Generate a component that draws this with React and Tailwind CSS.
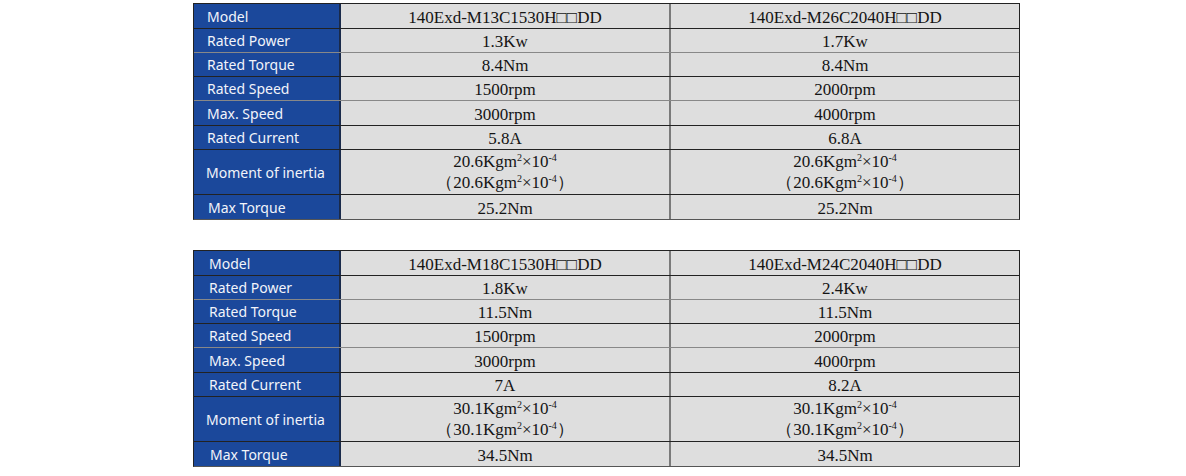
const tables = [
  {
    models: ["140Exd-M13C1530H□□DD", "140Exd-M26C2040H□□DD"],
    rows: [
      ["Rated Power", "1.3Kw", "1.7Kw"],
      ["Rated Torque", "8.4Nm", "8.4Nm"],
      ["Rated Speed", "1500rpm", "2000rpm"],
      ["Max. Speed", "3000rpm", "4000rpm"],
      ["Rated Current", "5.8A", "6.8A"],
    ],
    inertia: ["20.6", "20.6"],
    maxTorque: ["25.2Nm", "25.2Nm"],
  },
  {
    models: ["140Exd-M18C1530H□□DD", "140Exd-M24C2040H□□DD"],
    rows: [
      ["Rated Power", "1.8Kw", "2.4Kw"],
      ["Rated Torque", "11.5Nm", "11.5Nm"],
      ["Rated Speed", "1500rpm", "2000rpm"],
      ["Max. Speed", "3000rpm", "4000rpm"],
      ["Rated Current", "7A", "8.2A"],
    ],
    inertia: ["30.1", "30.1"],
    maxTorque: ["34.5Nm", "34.5Nm"],
  },
];

const rowHeights = ["h-[24px]", "h-[24px]", "h-[24px]", "h-[25px]", "h-[24px]"];
const rowBorders = ["border-[#888]", "border-[#222]", "border-[#888]", "border-[#222]", "border-[#222]"];

function Row({ label, a, b, h, border, pad = "pl-[13px]" }) {
  return (
    <div className={`grid grid-cols-[147px_330px_1fr] grid-rows-[minmax(0,1fr)] ${h} border-b ${border}`}>
      <div className={`bg-[#1b489b] text-[#f2f4fa] text-[14px] flex items-center ${pad} border-r-2 border-[#1a2a4a] font-['Noto_Sans',sans-serif]`}>
        {label}
      </div>
      <div className="bg-[#dedede] flex flex-col items-center justify-center pt-[2px] border-r-2 border-[#7a7a7a] text-[17px] text-[#141414] font-['Liberation_Serif',serif] leading-[19px]">
        {a}
      </div>
      <div className="bg-[#dedede] flex flex-col items-center justify-center pt-[2px] text-[17px] text-[#141414] font-['Liberation_Serif',serif] leading-[19px]">
        {b}
      </div>
    </div>
  );
}

function Inertia({ v }) {
  return (
    <>
      <div className="h-[21px]">
        {v}Kgm<sup className="text-[10px] top-[-6px]">2</sup>×10<sup className="text-[10px] top-[-6px]">-4</sup>
      </div>
      <div className="h-[21px]">
        （{v}Kgm<sup className="text-[10px] top-[-6px]">2</sup>×10<sup className="text-[10px] top-[-6px]">-4</sup>）
      </div>
    </>
  );
}

function SpecTable({ t, pad }) {
  return (
    <div className="w-[827px] border border-[#222] border-b-[#555] ml-[193px]">
      <Row label="Model" a={t.models[0]} b={t.models[1]} h="h-[25px]" border="border-[#222]" pad={pad} />
      {t.rows.map((r, i) => (
        <Row key={r[0]} label={r[0]} a={r[1]} b={r[2]} h={rowHeights[i]} border={rowBorders[i]} pad={pad} />
      ))}
      <Row
        label="Moment of inertia"
        a={<Inertia v={t.inertia[0]} />}
        b={<Inertia v={t.inertia[1]} />}
        h="h-[45px]"
        border="border-[#222]"
        pad="pl-[12px]"
      />
      <div className="grid grid-cols-[147px_330px_1fr] grid-rows-[minmax(0,1fr)] h-[24px]">
        <div className={`bg-[#1b489b] text-[#f2f4fa] text-[14px] flex items-center ${pad === "pl-[13px]" ? "pl-[14px]" : "pl-[16px]"} border-r-2 border-[#1a2a4a] font-['Noto_Sans',sans-serif]`}>
          Max Torque
        </div>
        <div className="bg-[#dedede] flex items-center justify-center pt-[2px] border-r-2 border-[#7a7a7a] text-[17px] text-[#141414] font-['Liberation_Serif',serif] leading-[19px]">
          {t.maxTorque[0]}
        </div>
        <div className="bg-[#dedede] flex items-center justify-center pt-[2px] text-[17px] text-[#141414] font-['Liberation_Serif',serif] leading-[19px]">
          {t.maxTorque[1]}
        </div>
      </div>
    </div>
  );
}

export default function App() {
  return (
    <div className="w-[1186px] h-[476px] bg-white pt-[3px] flex flex-col gap-[30px]">
      <SpecTable t={tables[0]} pad="pl-[13px]" />
      <SpecTable t={tables[1]} pad="pl-[15px]" />
    </div>
  );
}
